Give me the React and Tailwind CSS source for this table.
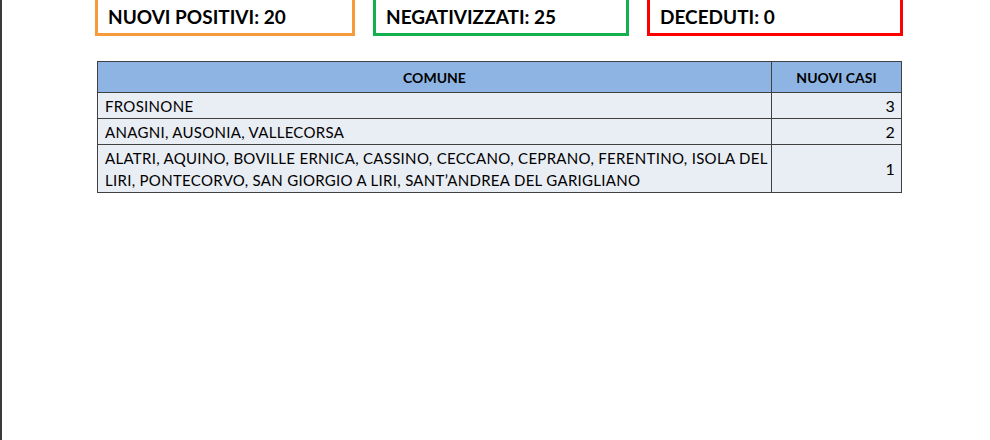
// App.jsx - bollettino casi giornalieri per comune
export default function App() {

  const rows = [
    { comune: ["FROSINONE"], casi: 3, h: "h-[26px]" },
    { comune: ["ANAGNI, AUSONIA, VALLECORSA"], casi: 2, h: "h-[26px]" },
    {
      comune: [
        "ALATRI, AQUINO, BOVILLE ERNICA, CASSINO, CECCANO, CEPRANO, FERENTINO, ISOLA DEL",
        "LIRI, PONTECORVO, SAN GIORGIO A LIRI, SANT\u2019ANDREA DEL GARIGLIANO",
      ],
      casi: 1,
      h: "h-[47px]",
    },
  ];

  return (
    <div className="w-[990px] h-[440px] bg-white border-l-2 border-[#3a3a3a] overflow-hidden font-['Lato','Open_Sans',sans-serif] text-black">

      {/* Riquadri riepilogo */}
      <div className="flex pl-[93px] gap-[18px]">
        <div className="w-[260px] h-[36px] border-x-[3px] border-b-[3px] border-[#f79a3a] flex items-center pl-[10px] pt-[1px] text-[19px] font-bold">NUOVI POSITIVI: 20</div>
        <div className="w-[256px] h-[36px] border-x-[3px] border-b-[3px] border-[#13b04f] flex items-center pl-[10px] pt-[1px] text-[19px] font-bold">NEGATIVIZZATI: 25</div>
        <div className="w-[256px] h-[36px] border-x-[3px] border-b-[3px] border-[#ff0000] flex items-center pl-[10px] pt-[1px] text-[19px] font-bold">DECEDUTI: 0</div>
      </div>

      {/* Tabella comuni */}
      <div className="ml-[95px] mt-[25px] w-[805px] border border-[#404040] text-[15px] tracking-[0.3px]">
        <div className="flex h-[31px] bg-[#8eb4e3] border-b border-[#404040] text-[14px] tracking-normal font-bold">
          <div className="w-[673px] flex items-center justify-center">COMUNE</div>
          <div className="flex-1 flex items-center justify-center border-l border-[#404040]">NUOVI CASI</div>
        </div>
        {rows.map((r, i) => (
          <div key={i} className={"flex bg-[#e9edf4] " + r.h + (i < rows.length - 1 ? " border-b border-[#404040]" : "")}>
            <div className="w-[673px] flex flex-col justify-center pl-[7px] leading-[22px]">
              {r.comune.map((t, j) => <span key={j} className="whitespace-nowrap">{t}</span>)}
            </div>
            <div className="flex-1 flex items-center justify-end pr-[6px] border-l border-[#404040] text-[16px]">{r.casi}</div>
          </div>
        ))}
      </div>
    </div>
  )
}
